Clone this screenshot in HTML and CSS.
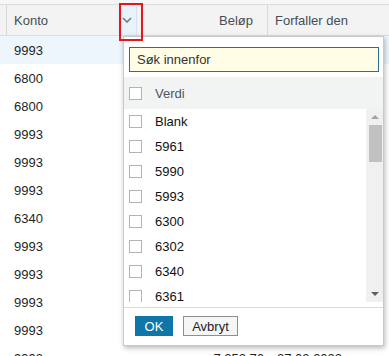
FILE: index.html
```html
<!DOCTYPE html>
<html lang="no">
<head>
    <meta charset="utf-8" />
    <meta name="viewport" content="width=device-width, initial-scale=1" />
    <title>Konto filter</title>
    <link rel="stylesheet" href="styles.css">
</head>
<body>
    <div class="grid">
        <div class="row head">
            <div class="cell gutter"></div>
            <div class="cell konto">
                <span class="label">Konto</span>
                <span class="filter-btn">
                    <svg viewBox="0 0 10 6" width="10" height="6">
                        <path d="M1 1 L5 5 L9 1" fill="none" stroke="#7a7a7a" stroke-width="1.6"/>
                    </svg>
                </span>
            </div>
            <div class="cell belop">Beløp</div>
            <div class="cell forfall">Forfaller den</div>
        </div>

        <div class="row selected">
            <div class="cell gutter"></div><div class="cell konto">9993</div>
            <div class="cell belop"></div><div class="cell forfall"></div>
        </div>
        <div class="row">
            <div class="cell gutter"></div><div class="cell konto">6800</div>
            <div class="cell belop"></div><div class="cell forfall"></div>
        </div>
        <div class="row">
            <div class="cell gutter"></div><div class="cell konto">6800</div>
            <div class="cell belop"></div><div class="cell forfall"></div>
        </div>
        <div class="row">
            <div class="cell gutter"></div><div class="cell konto">9993</div>
            <div class="cell belop"></div><div class="cell forfall"></div>
        </div>
        <div class="row">
            <div class="cell gutter"></div><div class="cell konto">9993</div>
            <div class="cell belop"></div><div class="cell forfall"></div>
        </div>
        <div class="row">
            <div class="cell gutter"></div><div class="cell konto">9993</div>
            <div class="cell belop"></div><div class="cell forfall"></div>
        </div>
        <div class="row">
            <div class="cell gutter"></div><div class="cell konto">6340</div>
            <div class="cell belop"></div><div class="cell forfall"></div>
        </div>
        <div class="row">
            <div class="cell gutter"></div><div class="cell konto">9993</div>
            <div class="cell belop"></div><div class="cell forfall"></div>
        </div>
        <div class="row">
            <div class="cell gutter"></div><div class="cell konto">9993</div>
            <div class="cell belop"></div><div class="cell forfall"></div>
        </div>
        <div class="row">
            <div class="cell gutter"></div><div class="cell konto">9993</div>
            <div class="cell belop"></div><div class="cell forfall"></div>
        </div>
        <div class="row">
            <div class="cell gutter"></div><div class="cell konto">9993</div>
            <div class="cell belop"></div><div class="cell forfall"></div>
        </div>
        <div class="row">
            <div class="cell gutter"></div><div class="cell konto">9993</div>
            <div class="cell belop">7 252,76</div><div class="cell forfall">27.02.2022</div>
        </div>
    </div>

    <div class="filter-pop">
        <div class="search">
            <input class="search-input" type="text" placeholder="Søk innenfor">
        </div>
        <div class="list-head">
            <span class="check"></span>
            <span class="list-title">Verdi</span>
        </div>
        <div class="list-wrap">
            <ul class="list">
                <li><span class="check"></span>Blank</li>
                <li><span class="check"></span>5961</li>
                <li><span class="check"></span>5990</li>
                <li><span class="check"></span>5993</li>
                <li><span class="check"></span>6300</li>
                <li><span class="check"></span>6302</li>
                <li><span class="check"></span>6340</li>
                <li><span class="check"></span>6361</li>
            </ul>
            <div class="scrollbar">
                <span class="arrow up"></span>
                <span class="thumb"></span>
                <span class="track"></span>
                <span class="arrow down"></span>
            </div>
        </div>
        <div class="actions">
            <button class="btn btn-ok">OK</button>
            <button class="btn btn-cancel">Avbryt</button>
        </div>
    </div>

    <div class="mark"></div>
</body>
</html>
```

FILE: styles.css
```css
* {
    margin: 0;
    padding: 0;
    box-sizing: border-box;
}

body {
    font-family: "Liberation Sans", Arial, sans-serif;
    font-size: 13px;
    color: #1f1f1f;
    background: #fff;
    width: 389px;
    height: 356px;
    overflow: hidden;
    position: relative;
}

/* grid behind the popup */
.grid {
    padding-top: 4px;
    background: #f7f7f7;
}

.row {
    display: flex;
    height: 28px;
    align-items: center;
    background: #fff;
}

.row.selected {
    background: #edf6fd;
}

.row.head {
    height: 32px;
    background: #f3f3f3;
    border-top: 1px solid #dcdcdc;
    border-bottom: 1px solid #dcdcdc;
    color: #464d54;
    align-items: stretch;
}

.cell {
    display: flex;
    align-items: center;
    height: 100%;
    white-space: nowrap;
}

.gutter {
    width: 7px;
}

.head .gutter {
    border-right: 1px solid #d8d8d8;
}

.konto {
    width: 131px;
    padding-left: 7px;
}

.head .konto {
    justify-content: space-between;
}

.filter-btn {
    width: 20px;
    height: 100%;
    background: #e7f2fb;
    border-right: 1px solid #d3e2ee;
    display: flex;
    align-items: center;
    justify-content: center;
    margin-right: 1px;
}

.belop {
    width: 130px;
    justify-content: flex-end;
    padding-right: 4px;
}

.head .belop {
    border-right: 1px solid #d8d8d8;
    padding-right: 14px;
}

.forfall {
    flex: 1;
    padding-left: 9px;
}

.head .forfall {
    padding-left: 7px;
}

/* filter popup */
.filter-pop {
    position: absolute;
    left: 123px;
    top: 36px;
    width: 261px;
    height: 310px;
    background: #fff;
    border: 1px solid #c9c9c9;
    box-shadow: 1px 2px 5px rgba(0, 0, 0, 0.28);
    display: flex;
    flex-direction: column;
}

.search {
    padding: 10px 4px 5px 5px;
}

.search-input {
    display: block;
    width: 250px;
    height: 25px;
    border: 1px solid #2b6f95;
    background: #fffde6;
    padding: 0 7px;
    font-family: inherit;
    font-size: 13px;
    color: #333;
    outline: none;
}

.search-input::placeholder {
    color: #333;
    opacity: 1;
}

.list-head {
    height: 32px;
    background: #f2f4f4;
    display: flex;
    align-items: center;
    padding-left: 5px;
    color: #4d565e;
}

.check {
    width: 13px;
    height: 13px;
    border: 1px solid #b3b3b3;
    background: #fff;
    margin-right: 13px;
    flex-shrink: 0;
}

.list-wrap {
    height: 193px;
    display: flex;
    overflow: hidden;
}

.list {
    list-style: none;
    flex: 1;
}

.list li {
    height: 25px;
    display: flex;
    align-items: center;
    padding-left: 5px;
    color: #111;
}

.scrollbar {
    width: 17px;
    background: #f0f0f0;
    display: flex;
    flex-direction: column;
    align-items: center;
}

.arrow {
    width: 0;
    height: 0;
    border-left: 4px solid transparent;
    border-right: 4px solid transparent;
    margin: 6px 0;
}

.arrow.up {
    border-bottom: 4px solid #a3a3a3;
}

.arrow.down {
    border-top: 4px solid #606060;
}

.thumb {
    width: 13px;
    height: 37px;
    background: #c1c1c1;
    margin-left: 1px;
}

.track {
    flex: 1;
}

.actions {
    margin-top: 5px;
    border-top: 1px solid #dadada;
    padding: 8px 11px 0;
    display: flex;
    gap: 10px;
}

.btn {
    height: 20px;
    font-family: inherit;
    font-size: 13px;
    cursor: pointer;
}

.btn-ok {
    width: 38px;
    background: #0f76a9;
    color: #fff;
    border: none;
}

.btn-cancel {
    width: 55px;
    background: #f6f6f6;
    color: #222;
    border: 1px solid #8f8f8f;
}

/* red highlight around the filter button */
.mark {
    position: absolute;
    left: 119px;
    top: 3px;
    width: 24px;
    height: 38px;
    border: 2px solid #e5161f;
}
```
